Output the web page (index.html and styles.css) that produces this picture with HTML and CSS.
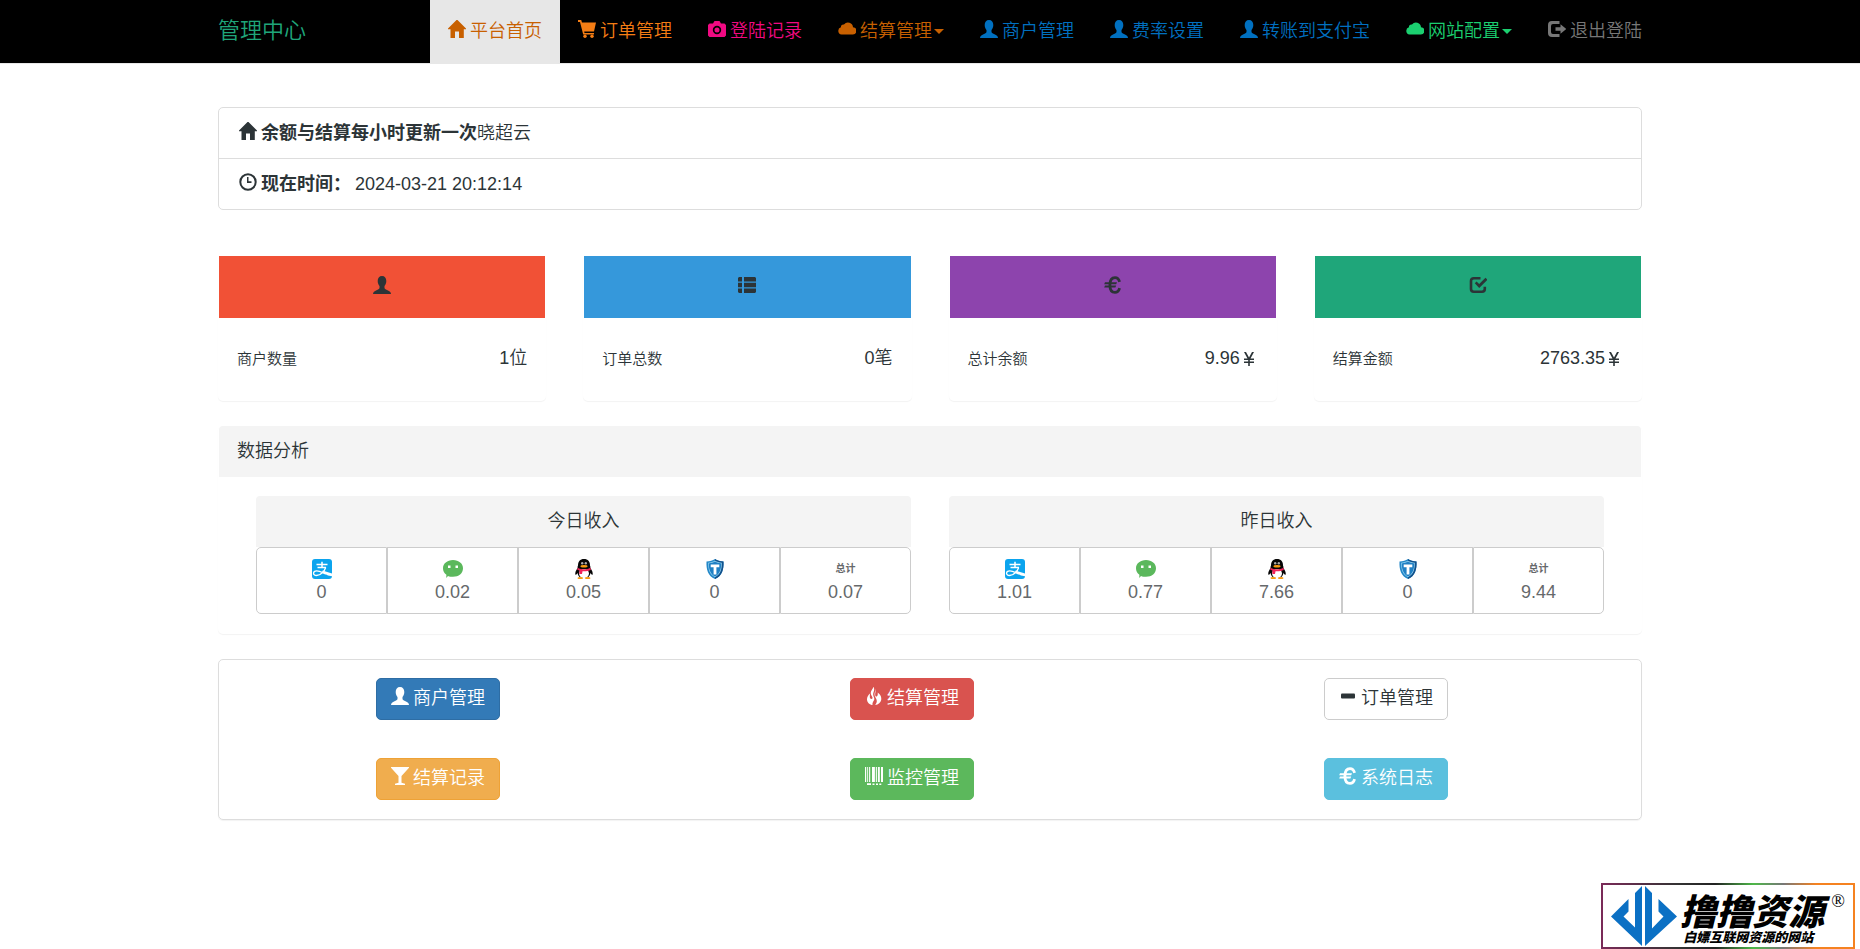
FILE: index.html
```html
<!DOCTYPE html>
<html lang="zh-CN">
<head>
<meta charset="utf-8">
<title>管理中心</title>
<link rel="stylesheet" href="styles.css">
</head>
<body>
<svg class="sprite" aria-hidden="true">
  <symbol id="i-home" viewBox="0 0 18 18"><path d="M9-.5l9.800 9.800H15.800V18H11v-6.500H7V18H2.500V9.300H-.8z"/></symbol>
  <symbol id="i-cart" viewBox="0 0 18 18"><path d="M0 0h3.200L4 2.500h14l-2 9H6.200l.3 1.500H16v1.500H5.200L2 2H0z"/><circle cx="7" cy="16.200" r="1.700"/><circle cx="14" cy="16.200" r="1.700"/></symbol>
  <symbol id="i-camera" viewBox="0 0 18 18"><path fill-rule="evenodd" d="M6.500 1h5l1.500 2.500h3.500L18 5v10.500l-1.500 1.500h-15L0 15.500V5l1.500-1.500H5zM9 5.800a4.200 4.200 0 1 0 0 8.400 4.200 4.200 0 0 0 0-8.400zm0 1.700a2.500 2.500 0 1 1 0 5 2.500 2.500 0 0 1 0-5z"/></symbol>
  <symbol id="i-cloud" viewBox="0 0 18 18"><path d="M3.500 14.500a3.700 3.700 0 0 1-.6-7.200A2.800 2.800 0 0 1 6 4.500a5 5 0 0 1 9 2.800 3.600 3.600 0 0 1-.4 7.200z"/></symbol>
  <symbol id="i-user" viewBox="0 0 18 18"><path d="M9 0C6.200 0 4.700 2 4.700 5c0 2 .7 3.800 1.800 5v2c-.3 1-1.500 1.400-3 2.200C1.500 15.200 0 16 0 18h18c0-2-1.500-2.800-3.500-3.800-1.500-.8-2.700-1.200-3-2.200v-2c1.100-1.200 1.800-3 1.800-5 0-3-1.500-5-4.300-5z"/></symbol>
  <symbol id="i-out" viewBox="0 0 18 18"><path d="M11.500 1H4Q0 1 0 5v8q0 4 4 4h7.500v-3H5q-2 0-2-2V6q0-2 2-2h6.500z"/><path d="M12.500 4.200L18.300 9l-5.800 4.800v-3.100H7.500V7.300h5z"/></symbol>
  <symbol id="i-time" viewBox="0 0 18 18"><circle cx="9" cy="9" r="7.700" fill="none" stroke="currentColor" stroke-width="2"/><path d="M8 4h1.500v4.300H12.500V10H8z"/></symbol>
  <symbol id="i-list" viewBox="0 0 18 18"><path d="M1 1h3v4.500H0V2zM6 1h11l1 1v3.500H6zM0 6.800h4v4.400H0zM6 6.800h12v4.400H6zM0 12.500h4V17H1l-1-1zM6 12.500h12V16l-1 1H6z"/></symbol>
  <symbol id="i-eur" viewBox="0 0 18 18"><path fill="none" stroke="currentColor" stroke-width="2.800" d="M15.600 5.800C14.800 3 13.200 1.600 11 1.600 7.500 1.600 5.900 4.600 5.900 9s1.600 7.400 5.100 7.400c2.200 0 3.800-1.400 4.600-4.200"/><path d="M1 6.300h12l-.8 1.900H.2zM1 9.500h11.200l-.8 1.900H.2z"/></symbol>
  <symbol id="i-check" viewBox="0 0 18 18"><path fill="none" stroke="currentColor" stroke-width="2.600" d="M11.500 2.300H4.800Q2 2.300 2 5v8q0 2.700 2.800 2.700H13q2.800 0 2.800-2.700v-2.200"/><path d="M5.800 7.200l1.700-1.700 2.700 2.600L16.500 1.800l2 1.900-8.300 8.400z"/></symbol>
  <symbol id="i-yen" viewBox="0 0 18 18"><path d="M4 2h2l3 5.500L12 2h2l-3.500 6.500H14v1.500h-4.200v1.500H14V13H9.800v3H8.200v-3H4v-1.500h4.200V10H4V8.500h3.500z"/></symbol>
  <symbol id="i-fire" viewBox="0 0 18 18"><path d="M8.500-.3C8.300 1.500 5.800 3.500 5.700 6c0 2.500 2.300 4 1.800 5.300-.5 1-2 .8-2.500-.3-.3-1-.2-2.500 0-4.500C3 8 1.800 10.500 2 13c.4 3 2.700 4.700 5.700 5.200-1-2 .8-3.700 1.500-5.500.6-2.200-1.500-3.700-1-6.200C8.600 4.500 10 2.500 8.500-.3z"/><path d="M10.500 1.500c1 2.500-.7 4.200-.3 6.700.3 1.500 1.300 1.700 2 .8.800-1 .6-2.500.5-3.500 3 2 4 4.800 3.500 7.500-.5 2.700-2.800 4.600-6 5 1.500-2 2-3.500 1.300-5.500-.6-1.700-2-3-2-5.500 0-2 1.500-3 1-5.500z"/></symbol>
  <symbol id="i-minus" viewBox="0 0 18 18"><rect x="2" y="6.500" width="14" height="5" rx="1"/></symbol>
  <symbol id="i-glass" viewBox="0 0 18 18"><path d="M0 0h18v.8L10.500 9v6.800l3.500 1V18H4v-1.200l3.500-1V9L0 .8z"/></symbol>
  <symbol id="i-barcode" viewBox="0 0 18 18"><path d="M0 0h1.200v15H0zM2.200 0h.9v15h-.9zM4.100 0h1.100v15H4.100zM7 0h2.900v15H7zM10.800 0h1.100v15h-1.100zM12.900 0h1.900v15h-1.900zM16 0h2v15h-2zM2 16.200h4V18H2zM7.500 16.500h2v1.500h-2zM11 16.500h2v1.500h-2zM14.300 16.500h2v1.500h-2z"/></symbol>
  <symbol id="p-alipay" viewBox="0 0 20 20"><rect width="20" height="20" rx="3" fill="#0ba4ee"/><g fill="none" stroke="#fff"><path stroke-width="1.500" d="M4.500 5.500h11M10 2.800V8.500M5.500 8.500h8.500"/><path stroke-width="1.300" d="M13.700 8.500C12.500 12 9 16.500 4.500 16.500c-4 0-4-4.700.2-4.700 3.300 0 6.500 2.200 9.300 3.200"/></g><path fill="#fff" d="M10.500 11.500L20 14.500v2.700l-4-.7-5.500-3z"/></symbol>
  <symbol id="p-wechat" viewBox="0 0 20 20"><path fill="#5bb85c" d="M10 1c5.800 0 10 3.600 10 8.300 0 5-4.200 8.500-10 8.500-1.800 0-3.500-.2-5-.9L3.200 19l.2-3.300C1.200 14.200 0 12 0 9.300 0 4.600 4.200 1 10 1z"/><rect x="5" y="6.500" width="2.500" height="2.500" fill="#fff"/><rect x="12.500" y="6.500" width="2.500" height="2.500" fill="#fff"/></symbol>
  <symbol id="p-qq" viewBox="0 0 20 20"><path fill="#060606" d="M10 0C6 0 4 2.600 4 6.500c-.4 1-.6 1.800-.4 2.500C2 11.200 1 13.500 1.300 15.500c.7.700 1.700-.5 2.200-1.500.3 2 1.200 3.300 2.500 4.300h8c1.300-1 2.200-2.300 2.500-4.300.5 1 1.500 2.200 2.200 1.500.3-2-.7-4.300-2.300-6.500.2-.7 0-1.500-.4-2.500C16 2.600 14 0 10 0z"/><ellipse cx="10" cy="14.500" rx="5" ry="4.500" fill="#fff"/><circle cx="8.200" cy="4.200" r="1.200" fill="#aaa"/><circle cx="11.800" cy="4.200" r="1.200" fill="#aaa"/><ellipse cx="10" cy="7.200" rx="3.600" ry="1.300" fill="#f79a10"/><path fill="#f0245a" d="M3.500 8.700c4 2 9 2 13 0l.3 2.300c-2.500 1.200-5.300 1.500-8.300 1.300L8 15H5.300l.2-3.500-2.200-.8z"/><ellipse cx="6.300" cy="19" rx="2.800" ry="1.100" fill="#f79a10"/><ellipse cx="13.700" cy="19" rx="2.800" ry="1.100" fill="#f79a10"/></symbol>
  <symbol id="p-shield" viewBox="0 0 20 20"><path fill="#2488c8" d="M10 0c2.300 1.500 5 2.300 8.500 2.500.4 8-1.500 14.500-8.500 17.500C3 17 1.100 10.500 1.500 2.500 5 2.300 7.700 1.500 10 0z"/><path fill="#12508a" d="M10 0c2.300 1.500 5 2.300 8.500 2.500.4 8-1.500 14.500-8.500 17.500z"/><path fill="#9bd8f4" d="M10 1.800c2 1.100 4.200 1.700 6.800 2 .2 6.500-1.500 11.700-6.800 14.500-5.300-2.800-7-8-6.800-14.500 2.600-.3 4.800-.9 6.800-2z"/><path fill="#2080c4" d="M10 2.600c1.900 1 4 1.500 6.200 1.800 0 5.900-1.500 10.400-6.200 13-4.700-2.600-6.200-7.100-6.200-13C6 4.100 8.100 3.600 10 2.600z"/><path fill="#fff" d="M5.700 5.500h8.600v2.700h-2.900v7.300H8.600V8.200H5.700z"/></symbol>
</svg>

<header class="topbar">
  <div class="topbar-inner">
    <a class="brand" href="#">管理中心</a>
    <nav class="menu">
      <a class="menu-link active" href="#"><svg class="icon"><use href="#i-home"/></svg>平台首页</a>
      <a class="menu-link orange" href="#"><svg class="icon"><use href="#i-cart"/></svg>订单管理</a>
      <a class="menu-link pink" href="#"><svg class="icon"><use href="#i-camera"/></svg>登陆记录</a>
      <a class="menu-link brown" href="#"><svg class="icon"><use href="#i-cloud"/></svg>结算管理<span class="caret"></span></a>
      <a class="menu-link blue" href="#"><svg class="icon"><use href="#i-user"/></svg>商户管理</a>
      <a class="menu-link blue" href="#"><svg class="icon"><use href="#i-user"/></svg>费率设置</a>
      <a class="menu-link blue" href="#"><svg class="icon"><use href="#i-user"/></svg>转账到支付宝</a>
      <a class="menu-link green" href="#"><svg class="icon"><use href="#i-cloud"/></svg>网站配置<span class="caret"></span></a>
      <a class="menu-link gray" href="#"><svg class="icon"><use href="#i-out"/></svg>退出登陆</a>
    </nav>
  </div>
</header>

<main class="container">
  <ul class="notice">
    <li class="notice-row"><svg class="icon"><use href="#i-home"/></svg><span><b>余额与结算每小时更新一次</b>晓超云</span></li>
    <li class="notice-row"><svg class="icon"><use href="#i-time"/></svg><b>现在时间：</b><time>2024-03-21 20:12:14</time></li>
  </ul>

  <section class="cards">
    <article class="card"><div class="card-head red"><svg class="icon"><use href="#i-user"/></svg></div><div class="card-body"><span class="card-label">商户数量</span><span class="card-value">1位</span></div></article>
    <article class="card"><div class="card-head sky"><svg class="icon"><use href="#i-list"/></svg></div><div class="card-body"><span class="card-label">订单总数</span><span class="card-value">0笔</span></div></article>
    <article class="card"><div class="card-head purple"><svg class="icon"><use href="#i-eur"/></svg></div><div class="card-body"><span class="card-label">总计余额</span><span class="card-value">9.96<svg class="icon"><use href="#i-yen"/></svg></span></div></article>
    <article class="card"><div class="card-head teal"><svg class="icon"><use href="#i-check"/></svg></div><div class="card-body"><span class="card-label">结算金额</span><span class="card-value">2763.35<svg class="icon"><use href="#i-yen"/></svg></span></div></article>
  </section>

  <section class="panel">
    <h2 class="panel-head">数据分析</h2>
    <div class="panel-body">
      <div class="income">
        <h3 class="panel-head center">今日收入</h3>
        <div class="group">
          <button class="stat" type="button"><svg class="pay"><use href="#p-alipay"/></svg>0</button>
          <button class="stat" type="button"><svg class="pay"><use href="#p-wechat"/></svg>0.02</button>
          <button class="stat" type="button"><svg class="pay"><use href="#p-qq"/></svg>0.05</button>
          <button class="stat" type="button"><svg class="pay"><use href="#p-shield"/></svg>0</button>
          <button class="stat" type="button"><span class="total">总计</span>0.07</button>
        </div>
      </div>
      <div class="income">
        <h3 class="panel-head center">昨日收入</h3>
        <div class="group">
          <button class="stat" type="button"><svg class="pay"><use href="#p-alipay"/></svg>1.01</button>
          <button class="stat" type="button"><svg class="pay"><use href="#p-wechat"/></svg>0.77</button>
          <button class="stat" type="button"><svg class="pay"><use href="#p-qq"/></svg>7.66</button>
          <button class="stat" type="button"><svg class="pay"><use href="#p-shield"/></svg>0</button>
          <button class="stat" type="button"><span class="total">总计</span>9.44</button>
        </div>
      </div>
    </div>
  </section>

  <section class="shortcuts">
    <div class="shortcut-grid">
      <button class="btn primary" type="button"><svg class="icon"><use href="#i-user"/></svg>商户管理</button>
      <button class="btn danger" type="button"><svg class="icon"><use href="#i-fire"/></svg>结算管理</button>
      <button class="btn plain" type="button"><svg class="icon"><use href="#i-minus"/></svg>订单管理</button>
      <button class="btn warning" type="button"><svg class="icon"><use href="#i-glass"/></svg>结算记录</button>
      <button class="btn success" type="button"><svg class="icon"><use href="#i-barcode"/></svg>监控管理</button>
      <button class="btn info" type="button"><svg class="icon"><use href="#i-eur"/></svg>系统日志</button>
    </div>
  </section>
</main>

<aside class="badge">
  <svg class="badge-logo" viewBox="0 0 66 62"><g fill="#0b70c4"><path d="M24 8L31 1V61L0 31.500 17.500 14v12.500l-5 5 11.500 11z"/><path d="M34 1l7 7v35.500l11.500-12-5-5V14L66 31.500 34 61z"/></g></svg>
  <div class="badge-text">
    <div class="badge-name">撸撸资源</div>
    <div class="badge-sub">白嫖互联网资源的网站</div>
  </div>
  <span class="badge-mark">®</span>
</aside>
</body>
</html>
```
FILE: styles.css
```css
* { box-sizing: border-box; }

body {
  margin: 0;
  background: #fff;
  color: #2c3437;
  font-family: "Liberation Sans", "Noto Sans CJK SC", sans-serif;
  font-size: 18px;
  font-weight: 350;
  line-height: 27px;
}

button { font: inherit; cursor: pointer; }
a { text-decoration: none; }
b { font-weight: 700; }

.sprite { position: absolute; width: 0; height: 0; }

.icon {
  flex: none;
  width: 18px;
  height: 18px;
  fill: currentColor;
  overflow: visible;
}

.topbar { background: #000; border-bottom: 1px solid #e7e7e7; }

.topbar-inner {
  display: flex;
  justify-content: space-between;
  max-width: 1460px;
  margin: 0 auto;
  padding: 0 0 0 18px;
}

.brand {
  padding: 17px 0 18px;
  color: #1fa67a;
  font-size: 22px;
  white-space: nowrap;
}

.menu { display: flex; }

.menu-link {
  display: flex;
  align-items: center;
  gap: 4px;
  padding: 18px;
  white-space: nowrap;
}

.menu-link .icon, .notice-row .icon, .btn .icon { margin-bottom: 5px; }

.active { background: #e7e7e7; color: #c86000; }
.orange { color: #f57d14; }
.pink { color: #f00a82; }
.brown { color: #c86000; }
.blue { color: #0070c0; }
.green { color: #1bd070; }
.gray { color: #777; }

.caret {
  margin-left: -2px;
  border: 5px solid transparent;
  border-top-color: currentColor;
  border-bottom: 0;
}

.container {
  max-width: 1460px;
  margin: 0 auto;
  padding: 43px 18px;
}

.notice {
  margin: 0 0 45px;
  padding: 0;
  list-style: none;
  border: 1px solid #ddd;
  border-radius: 5px;
}

.notice-row {
  display: flex;
  align-items: center;
  gap: 4px;
  padding: 12px 20px 11px;
}

.notice-row + .notice-row { border-top: 1px solid #ddd; }

.cards {
  display: grid;
  grid-template-columns: repeat(4, 1fr);
  gap: 37px;
  margin-bottom: 24px;
}

.card, .panel, .income {
  border: 1px solid transparent;
  border-radius: 5px;
}

.card, .panel { box-shadow: 0 1px 1px rgba(0, 0, 0, 0.05); }

.card-head {
  display: flex;
  align-items: center;
  justify-content: center;
  height: 62px;
  padding-bottom: 4px;
}

.red { background: #f15136; }
.sky { background: #3598db; }
.purple { background: #8d44ad; }
.teal { background: #1fa67a; }

.card-body {
  display: flex;
  align-items: center;
  justify-content: space-between;
  padding: 27px 18px 28px;
}

.card-label { font-size: 15px; }
.card-value { display: flex; align-items: center; }

.panel { margin-bottom: 25px; }

.panel-head {
  margin: 0;
  padding: 12px 18px;
  border-radius: 4px 4px 0 0;
  background: #f4f4f4;
  font-size: 18px;
  font-weight: 350;
}

.center { text-align: center; }

.panel-body {
  display: grid;
  grid-template-columns: repeat(2, 1fr);
  gap: 36px;
  padding: 18px 36px;
}

.group { display: flex; }

.stat {
  display: flex;
  flex: 1;
  flex-direction: column;
  align-items: center;
  padding: 11px 0 8px;
  border: 1px solid #ccc;
  background: #fff;
  color: #66696b;
  line-height: 26px;
}

.stat:first-child { border-radius: 5px 0 0 5px; }
.stat:last-child { border-radius: 0 5px 5px 0; }

.pay { width: 20px; height: 20px; }
.total { font-size: 10px; font-weight: 700; line-height: 20px; }

.shortcuts {
  padding: 18px 18px 19px 0;
  border: 1px solid #ddd;
  border-radius: 5px;
  box-shadow: 0 1px 1px rgba(0, 0, 0, 0.05);
}

.shortcut-grid {
  display: grid;
  grid-template-columns: repeat(3, 1fr);
  justify-items: center;
  row-gap: 38px;
  margin-left: -18px;
}

.btn {
  display: flex;
  align-items: center;
  gap: 4px;
  height: 42px;
  padding: 0 14px 2px;
  border: 1px solid;
  border-radius: 5px;
  color: #fff;
}

.primary { background: #337ab7; border-color: #2e6da4; }
.danger { background: #d9534f; border-color: #d9534f; }
.plain { background: #fff; border-color: #ccc; color: #2c3437; }
.warning { background: #f0ad4e; border-color: #eea236; }
.success { background: #5cb85c; border-color: #5cb85c; }
.info { background: #5bc0de; border-color: #5bc0de; }

.badge {
  position: fixed;
  right: 5px;
  bottom: 0;
  display: flex;
  align-items: flex-start;
  padding: 0 8px;
  border: 2px solid;
  border-image: linear-gradient(90deg, #7a2a58, #333 30%, #222 45%, #4db848 60%, #777 72%, #f58220 85%) 1;
  background: #fff;
  color: #000;
}

.badge-logo { width: 66px; height: 62px; }

.badge-text {
  padding-top: 3px;
  font-family: "Noto Sans CJK SC", sans-serif;
  font-style: italic;
  font-weight: 900;
}

.badge-name { margin-left: 3px; font-size: 36px; line-height: 42px; }
.badge-sub { margin-left: 6px; font-size: 13px; line-height: 14px; }

.badge-mark {
  margin-left: 7px;
  font-family: "Liberation Serif", serif;
  font-size: 18px;
  line-height: 32px;
}
```
